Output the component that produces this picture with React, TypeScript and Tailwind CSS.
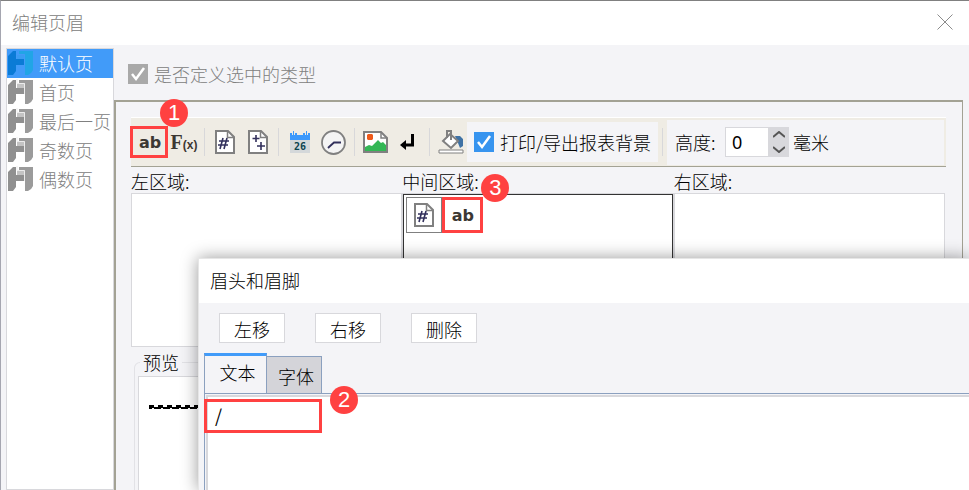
import React, { useState } from 'react';

interface PageItem {
  id: string;
  label: string;
}

const pages: PageItem[] = [
  { id: 'default', label: '默认页' },
  { id: 'first', label: '首页' },
  { id: 'last', label: '最后一页' },
  { id: 'odd', label: '奇数页' },
  { id: 'even', label: '偶数页' },
];

const PageLogo: React.FC<{ active: boolean }> = ({ active }) => (
  <svg width="25" height="25" viewBox="0 0 25 25" className="shrink-0" aria-hidden="true">
    <path d="M11 1H25V20Q24 23 20 25H17V4H11Z" fill={active ? '#21a5e6' : '#9b9b9b'} />
    <path d="M9 4H17V9H9Z" fill={active ? '#3a9cf2' : '#c4c4c4'} />
    <path d="M0 6 5 1H8V9H16V15H8V21L5 25H0Z" fill={active ? '#0a7bd6' : '#909090'} />
    <path d="M9 0V4.500H16.500V15" stroke={active ? '#419bf9' : '#ececec'} strokeWidth="1" fill="none" />
  </svg>
);

const PageIcon: React.FC<{ sign: 'number' | 'total' }> = ({ sign }) => (
  <svg width="20" height="24" viewBox="0 0 20 24" fill="none" aria-hidden="true">
    <path d="M1 1H13L19 7V23H1Z" fill="#fff" stroke="#808080" strokeWidth="2" />
    <path d="M12.500 1V7.500H19" stroke="#808080" strokeWidth="1.500" />
    {sign === 'number' ? (
      <path d="M8 8 5 19M12 8 9 19M4 11H14M3 15H13" stroke="#32305c" strokeWidth="1.600" />
    ) : (
      <path d="M8 5V12M4.500 8.500H11.500M13 12V20M9 16H17" stroke="#32305c" strokeWidth="1.600" />
    )}
  </svg>
);

const CalendarIcon = () => (
  <svg width="20" height="22" viewBox="0 0 20 22" aria-hidden="true">
    <path d="M0 8H20V22H0Z" fill="#d4d8da" />
    <path d="M0 2H2V4H5V2H7V4H13V2H15V4H18V2H20V9H0Z" fill="#3b99fc" />
    <path d="M3 0H4V4H3ZM16 0H17V4H16Z" fill="#3b99fc" />
    <text x="10" y="19" textAnchor="middle" fontSize="10" fontWeight="bold" fontFamily="DejaVu Sans Mono" fill="#0c4450">26</text>
  </svg>
);

const ClockIcon = () => (
  <svg width="25" height="25" viewBox="0 0 25 25" fill="none" aria-hidden="true">
    <circle cx="12.500" cy="12.500" r="11.500" fill="#f4f4f4" stroke="#808080" strokeWidth="1.800" />
    <path d="M7 18 8 17 13 12.500H20" stroke="#32305c" strokeWidth="1.800" />
  </svg>
);

const PictureIcon = () => (
  <svg width="25" height="22" viewBox="0 0 25 22" fill="none" aria-hidden="true">
    <path d="M1 1H18L24 7V21H1Z" fill="#fff" stroke="#808080" strokeWidth="2" />
    <path d="M18 1V7H24" stroke="#808080" strokeWidth="1.500" />
    <path d="M4 4 5 3H9L10 4V8L9 9H5L4 8Z" fill="#ef5a1a" />
    <path d="M2 16 6 14 9 15 15 9 18 12 20 11 23 14V20H2Z" fill="#33b755" />
  </svg>
);

const ReturnIcon = () => (
  <svg width="15" height="17" viewBox="0 0 15 17" fill="none" aria-hidden="true">
    <path d="M12.500 0V11H4" stroke="#000" strokeWidth="3" />
    <path d="M0 11 6 6V16Z" fill="#000" />
  </svg>
);

const BucketIcon = () => (
  <svg width="26" height="24" viewBox="0 0 26 24" fill="none" aria-hidden="true">
    <path d="M17 6H22L25 9V16L22 18L20 13Z" fill="#3f72a5" />
    <path d="M12 4 20 11 13 18 5 11Z" fill="#fff" stroke="#808080" strokeWidth="2" />
    <path d="M9 8V1H13V10" stroke="#808080" strokeWidth="2" />
    <path d="M1 20H25V23H1Z" fill="#fff" stroke="#808080" strokeWidth="1" />
  </svg>
);

const Separator = () => <span className="h-7 w-px shrink-0 bg-[#d8d8da]" />;

const CheckMark = () => (
  <svg viewBox="0 0 20 20" className="pointer-events-none absolute inset-0 size-5" fill="none" aria-hidden="true">
    <path d="M4 10 8 15 16 4" stroke="#fff" strokeWidth="2.500" />
  </svg>
);

const Badge: React.FC<{ value: number; className: string }> = ({ value, className }) => (
  <span
    className={`absolute z-20 flex size-7 items-center justify-center rounded-full bg-[#ff4141] font-['Liberation_Sans'] text-[22px] font-normal text-white ${className}`}
  >
    {value}
  </span>
);

const App: React.FC = () => {
  const [page, setPage] = useState('default');
  const [tab, setTab] = useState<'text' | 'font'>('text');
  const [background, setBackground] = useState(true);
  const [height, setHeight] = useState(0);
  const [content, setContent] = useState('/');

  return (
    <div className="relative flex h-screen flex-col overflow-hidden border-t border-l border-t-[#808080] border-l-[#a5a6b0] bg-[#f4f4f7] font-['Noto_Sans_CJK_SC',sans-serif] text-lg leading-6 font-light text-black">
      {/* Title bar */}
      <header className="flex h-11 shrink-0 items-center justify-between bg-white pr-4 pb-[2px] pl-[11px]">
        <h1 className="text-[#808080]">编辑页眉</h1>
        <button type="button" aria-label="关闭">
          <svg width="16" height="16" viewBox="0 0 16 16" fill="none" stroke="#8b8b8b" aria-hidden="true">
            <path d="M0.500 0.500 15.500 15.500M15.500 0.500 0.500 15.500" />
          </svg>
        </button>
      </header>

      <div className="flex min-h-0 flex-1 pt-[3px]">
        {/* Page types */}
        <nav className="ml-[5px] w-[108px] shrink-0 border border-[#d8d8dc] bg-white">
          {pages.map((item) => (
            <button
              key={item.id}
              type="button"
              onClick={() => setPage(item.id)}
              className={`flex h-[29px] w-full items-center gap-[6px] whitespace-nowrap pb-[2px] pl-px ${
                page === item.id ? 'bg-[#419bf9] text-white' : 'text-[#808080]'
              }`}
            >
              <PageLogo active={page === item.id} />
              {item.label}
            </button>
          ))}
        </nav>

        <main className="flex min-w-0 flex-1 flex-col pr-[6px]">
          <label className="flex h-[52px] shrink-0 items-center gap-[6px] pl-[14px] text-[#808080]">
            <span className="relative size-5">
              <input type="checkbox" defaultChecked disabled className="block size-5 appearance-none bg-[#a9a9a9]" />
              <CheckMark />
            </span>
            是否定义选中的类型
          </label>

          <section className="flex min-h-0 flex-1 flex-col border-t-2 border-r border-l-2 border-[#a3a294] pt-[15px] pr-4 pl-[15px]">
            {/* Toolbar */}
            <div className="relative flex h-[50px] shrink-0 items-center border-t border-b border-t-white border-b-[#a3a294] bg-[#efece4]">
              <button type="button" className="-ml-px h-8 w-[38px] border-[3px] border-[#ff4141] pt-[2px] pl-[2px] font-['DejaVu_Sans'] text-base leading-6 font-bold text-[#3c3833]">
                ab
              </button>
              <button type="button" className="w-8 whitespace-nowrap font-['Liberation_Serif'] text-xl font-bold text-[#3c3833]">
                F<span className="font-['Liberation_Sans'] text-xs">(x)</span>
              </button>
              <div className="ml-1 flex items-center gap-[10px]">
                <Separator />
                <button type="button" aria-label="页码"><PageIcon sign="number" /></button>
                <button type="button" aria-label="总页数" className="ml-[3px]"><PageIcon sign="total" /></button>
                <Separator />
                <button type="button" aria-label="日期" className="ml-px"><CalendarIcon /></button>
                <button type="button" aria-label="时间" className="ml-px"><ClockIcon /></button>
              </div>
              <div className="ml-2 flex items-center gap-2">
                <Separator />
                <button type="button" aria-label="图片"><PictureIcon /></button>
                <button type="button" aria-label="换行" className="mr-[6px] ml-1"><ReturnIcon /></button>
                <Separator />
                <button type="button" aria-label="背景"><BucketIcon /></button>
              </div>
              <label className="ml-[3px] flex h-10 shrink-0 items-center gap-[6px] bg-[#f4f4f7] px-[7px] whitespace-nowrap">
                <span className="relative size-5">
                  <input
                    type="checkbox"
                    checked={background}
                    onChange={(e) => setBackground(e.target.checked)}
                    className="block size-5 appearance-none bg-[#3794ef]"
                  />
                  {background && <CheckMark />}
                </span>
                打印/导出报表背景
              </label>
              <span className="w-1" />
              <Separator />
              <div className="mr-[2px] ml-1 flex h-[45px] flex-1 items-center bg-[#f4f4f7] pl-2 whitespace-nowrap">
                <label htmlFor="height" className="w-[50px]">高度:</label>
                <input
                  id="height"
                  type="text"
                  value={height}
                  onChange={(e) => setHeight(Number(e.target.value) || 0)}
                  className="h-[30px] w-[44px] border border-[#d8d8dc] bg-white pl-[6px] font-['Noto_Sans'] font-normal"
                />
                <span className="mr-1 flex h-[30px] w-5 flex-col bg-[#d8d8dc]">
                  <button type="button" aria-label="增加" onClick={() => setHeight(height + 1)} className="flex flex-1 items-center justify-center">
                    <svg width="12" height="7" viewBox="0 0 12 7" fill="none" stroke="#555" strokeWidth="2" aria-hidden="true"><path d="M0 6 6 1 12 6" /></svg>
                  </button>
                  <button type="button" aria-label="减少" onClick={() => setHeight(Math.max(0, height - 1))} className="flex flex-1 items-center justify-center">
                    <svg width="12" height="7" viewBox="0 0 12 7" fill="none" stroke="#555" strokeWidth="2" aria-hidden="true"><path d="M0 1 6 6 12 1" /></svg>
                  </button>
                </span>
                毫米
              </div>
              <Badge value={1} className="-top-[19px] left-[29px]" />
            </div>

            {/* Header areas */}
            <div className="mt-[3px] grid shrink-0 grid-cols-3 pr-px">
              <div>
                <h2 className="h-[23px] leading-[22px]">左区域:</h2>
                <div className="h-[154px] border border-[#d8d8dc] bg-white" />
              </div>
              <div className="relative">
                <h2 className="h-[23px] leading-[22px]">中间区域:</h2>
                <div className="h-[154px] border border-[#d8d8dc]">
                  <div className="flex h-full border border-[#333] bg-white p-[2px]">
                    <button type="button" aria-label="页码" className="flex size-9 items-center justify-center border border-[#808080]">
                      <PageIcon sign="number" />
                    </button>
                    <button type="button" className="h-9 w-[41px] border-[3px] border-[#ff4141] pt-[2px] font-['DejaVu_Sans'] text-base leading-6 font-bold text-[#3c3833]">
                      ab
                    </button>
                  </div>
                </div>
                <Badge value={3} className="top-1 left-[79px]" />
              </div>
              <div>
                <h2 className="h-[23px] leading-[22px]">右区域:</h2>
                <div className="h-[154px] border border-[#d8d8dc] bg-white" />
              </div>
            </div>

            {/* Preview */}
            <fieldset className="mx-[3px] mt-[3px] flex min-h-0 flex-1 flex-col rounded-t-md border border-b-0 border-[#e2e2e6] px-[3px]">
              <legend className="ml-[2px] px-[3px]">预览</legend>
              <div className="mt-[2px] flex-1 border border-b-0 border-[#d8d8dc] bg-white pt-7 pl-[10px]">
                <svg width="100%" height="4" aria-hidden="true">
                  <defs>
                    <pattern id="wave" width="9" height="4" patternUnits="userSpaceOnUse">
                      <path d="M0 0H5V2H9V4H5V3H3V4H0Z" fill="#000" />
                    </pattern>
                  </defs>
                  <rect width="100%" height="4" fill="url(#wave)" />
                </svg>
              </div>
            </fieldset>
          </section>
        </main>
      </div>

      {/* Header and footer dialog */}
      <div role="dialog" aria-label="眉头和眉脚" className="absolute top-[257px] right-0 bottom-0 left-[197px] flex flex-col border-t border-l border-[#e6e6e6] bg-[#f4f4f7] shadow-[0_0_16px_rgba(0,0,0,0.4)]">
        <header className="flex h-11 shrink-0 items-center bg-white pb-[2px] pl-[11px]">
          <h2>眉头和眉脚</h2>
        </header>
        <div className="flex gap-[30px] px-5 pt-[10px]">
          {['左移', '右移', '删除'].map((label) => (
            <button key={label} type="button" className="h-[30px] w-[66px] border border-[#d8d8dc] bg-white pt-px">
              {label}
            </button>
          ))}
        </div>
        <div className="ml-[5px] flex items-end pt-[10px]" role="tablist">
          {([['text', '文本'], ['font', '字体']] as const).map(([id, label]) => (
            <button
              key={id}
              type="button"
              role="tab"
              aria-selected={tab === id}
              onClick={() => setTab(id)}
              className={
                tab === id
                  ? 'h-10 w-[63px] border-t-[3px] border-r border-l border-t-[#419bf9] border-x-[#8ba0bf] pb-[6px] pl-1'
                  : 'h-[37px] w-[55px] border-t border-r border-[#8ba0bf] bg-[#d4d4d9] pt-px pl-1'
              }
            >
              {label}
            </button>
          ))}
        </div>
        <div className="relative ml-[5px] flex-1 border-t border-l border-[#8ba0bf] pt-px pl-px">
          <textarea
            aria-label="文本"
            value={content}
            onChange={(e) => setContent(e.target.value)}
            className="block size-full resize-none border-t-2 border-l-2 border-[#d8d8dc] bg-white px-[7px] py-[6px] font-normal outline-none"
          />
          <span className="pointer-events-none absolute top-[5px] -left-px h-[34px] w-[118px] border-[3px] border-[#ff4141]" />
          <Badge value={2} className="-top-2 left-[125px]" />
        </div>
      </div>
    </div>
  );
};

export default App;
